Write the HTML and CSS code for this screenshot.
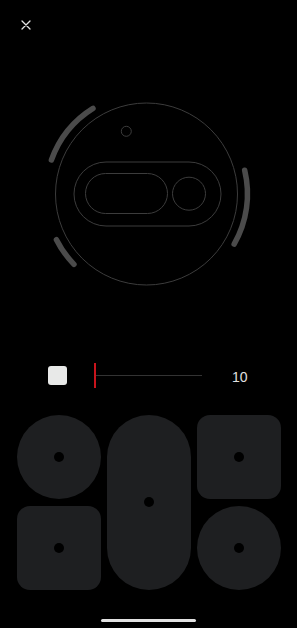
FILE: index.html
```html
<!DOCTYPE html>
<html lang="en">
<head>
<meta charset="utf-8">
<title>Robot control</title>
<link rel="stylesheet" href="styles.css">
</head>
<body>
<div class="screen">
  <header class="topbar">
    <button class="close" aria-label="Close">
      <svg width="10" height="10" viewBox="0 0 10 10"><path d="M1 1L9 9M9 1L1 9" stroke="#e6e6e6" stroke-width="1.3" stroke-linecap="round"/></svg>
    </button>
  </header>

  <div class="robot">
    <svg width="297" height="210" viewBox="0 0 297 210">
      <g fill="none" stroke="#4b4b4b" stroke-width="5.5" stroke-linecap="round">
        <path d="M51.41 69.95 A101 101 0 0 1 92.98 18.35"/>
        <path d="M244.67 80.25 A101 101 0 0 1 234.15 154.2"/>
        <path d="M73.97 174.29 A101 101 0 0 1 56.43 149.69"/>
      </g>
      <g fill="none" stroke="#3c3c3c" stroke-width="1">
        <circle cx="146.5" cy="104" r="91"/>
        <circle cx="126.3" cy="41.3" r="5"/>
        <rect x="74" y="72" width="147" height="64" rx="32"/>
        <rect x="85.5" y="83.5" width="82" height="40" rx="20"/>
        <circle cx="189" cy="103.7" r="16.5"/>
      </g>
    </svg>
  </div>

  <div class="controls">
    <div class="stop"></div>
    <div class="slider">
      <div class="thumb"></div>
      <div class="track"></div>
    </div>
    <div class="value">10</div>
  </div>

  <div class="pads">
    <div class="pad circle"><span class="dot"></span></div>
    <div class="pad pill"><span class="dot"></span></div>
    <div class="pad square"><span class="dot"></span></div>
    <div class="pad square"><span class="dot"></span></div>
    <div class="pad circle"><span class="dot"></span></div>
  </div>

  <div class="home"></div>
</div>
</body>
</html>
```

FILE: styles.css
```css
html, body {
  margin: 0;
  padding: 0;
  background: #000;
}
body {
  font-family: "Liberation Sans", Arial, sans-serif;
  color: #e6e6e6;
}
.screen {
  width: 297px;
  height: 628px;
  overflow: hidden;
}
.topbar {
  height: 50px;
  padding: 20px 0 0 21px;
  box-sizing: border-box;
}
.close {
  display: block;
  padding: 0;
  margin: 0;
  border: 0;
  background: none;
  width: 10px;
  height: 10px;
}
.close svg {
  display: block;
}
.robot {
  margin-top: 40px;
  height: 210px;
}
.robot svg {
  display: block;
}
.controls {
  margin-top: 63px;
  height: 25px;
  display: flex;
  align-items: center;
  padding-left: 48px;
}
.stop {
  width: 19px;
  height: 19px;
  border-radius: 3px;
  background: #e8e9e8;
}
.slider {
  margin-left: 27px;
  width: 108px;
  height: 25px;
  display: flex;
  align-items: center;
}
.thumb {
  width: 2px;
  height: 25px;
  background: #c8141c;
}
.track {
  flex: 1;
  height: 1px;
  background: #333;
}
.value {
  margin-left: 30px;
  font-size: 14px;
  line-height: 16px;
  color: #e0e0e0;
  padding-top: 2px;
}
.pads {
  margin-top: 27px;
  padding-left: 17px;
  display: grid;
  grid-template-columns: 84px 84px 84px;
  grid-template-rows: 84px 84px;
  column-gap: 6px;
  row-gap: 6.5px;
}
.pad {
  background: #1e1f21;
  display: flex;
  align-items: center;
  justify-content: center;
}
.pad.circle {
  border-radius: 50%;
}
.pad.square {
  border-radius: 13px;
}
.pad.pill {
  grid-row: span 2;
  border-radius: 42px;
}
.dot {
  width: 10px;
  height: 10px;
  border-radius: 50%;
  background: #000;
}
.home {
  margin: 29px auto 0;
  width: 95px;
  height: 3px;
  border-radius: 2px;
  background: #e2e2e2;
}
```
